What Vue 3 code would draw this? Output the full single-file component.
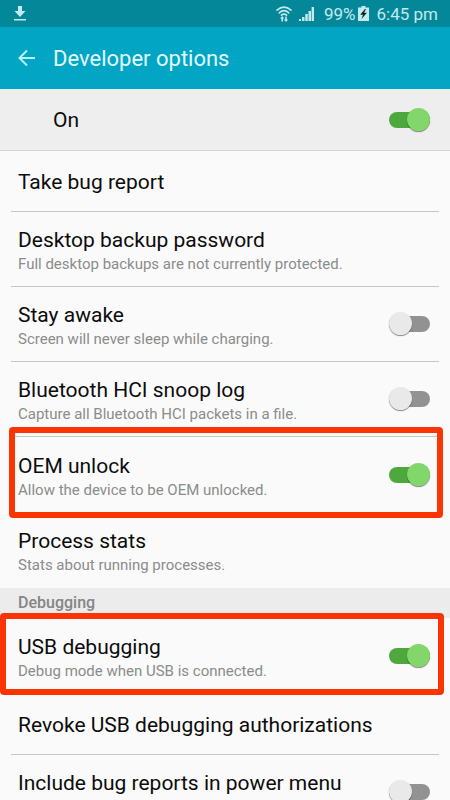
<script setup>
import { reactive, ref } from 'vue'

const enabled = ref(true)

const general = reactive([
  { id: 'bug-report', title: 'Take bug report' },
  { id: 'backup', title: 'Desktop backup password', note: 'Full desktop backups are not currently protected.' },
  { id: 'awake', title: 'Stay awake', note: 'Screen will never sleep while charging.', toggle: true, on: false },
  { id: 'snoop', title: 'Bluetooth HCI snoop log', note: 'Capture all Bluetooth HCI packets in a file.', toggle: true, on: false },
  { id: 'oem', title: 'OEM unlock', note: 'Allow the device to be OEM unlocked.', toggle: true, on: true, mark: 'mark-oem' },
  { id: 'stats', title: 'Process stats', note: 'Stats about running processes.' }
])

const debugging = reactive([
  { id: 'usb', title: 'USB debugging', note: 'Debug mode when USB is connected.', toggle: true, on: true, mark: 'mark-usb' },
  { id: 'revoke', title: 'Revoke USB debugging authorizations' },
  { id: 'power-menu', title: 'Include bug reports in power menu', note: 'Include option in power menu for taking a bug report.', toggle: true, on: false }
])

const groups = [
  { id: 'general', items: general },
  { id: 'debugging', heading: 'Debugging', items: debugging }
]
</script>

<template>
  <div class="screen">
    <div class="status">
      <svg class="download" width="12" height="15" viewBox="0 0 12 15" aria-hidden="true">
        <path d="M4 0h4v5h3.5L6 11 .5 5H4z" />
        <path d="M0 13h12v1.500H0z" />
      </svg>
      <div class="status-right">
        <svg class="wifi" width="16" height="16" viewBox="0 0 16 16" aria-hidden="true">
          <g fill="none" stroke="currentColor" stroke-width="1.600" stroke-linecap="round">
            <path d="M1 4.200Q8-2 15 4.200" />
            <path d="M3.200 6.800Q8 2.600 12.800 6.800" />
            <path d="M5.400 9.200Q8 7 10.600 9.200" />
          </g>
          <path d="M6.200 10l2.200 2.500H7v3H5.400v-3H4zM10 16l-2.200-2.500h1.400v-3h1.600v3h1.400z" />
        </svg>
        <svg class="signal" width="15" height="14" viewBox="0 0 15 14" aria-hidden="true">
          <path d="M0 12h2v2H0zM3 10h2.500v4H3zM6.300 7h2.500v7H6.300zM9.500 4H12v10H9.500zM12.600 0H15v14h-2.400z" />
        </svg>
        <span class="percent">99%</span>
        <svg class="battery" width="11" height="15" viewBox="0 0 11 15" aria-hidden="true">
          <path d="M3.500 0h4v1.500H11V15H0V1.500h3.500z" />
          <path class="bolt" d="M7 3L2.200 8.800H5L3.500 13l5.400-6.200H6L8 3z" />
        </svg>
        <span>6:45 pm</span>
      </div>
    </div>

    <header class="bar">
      <button class="back" type="button" aria-label="Back">
        <svg width="18" height="18" viewBox="0 0 18 18" aria-hidden="true">
          <path d="M17 9H1.500M9 1.500L1.500 9 9 16.500" fill="none" stroke="currentColor" stroke-width="2" />
        </svg>
      </button>
      <h1>Developer options</h1>
    </header>

    <label class="master">
      <span class="title">On</span>
      <input v-model="enabled" class="switch" type="checkbox" role="switch">
    </label>

    <main class="list">
      <section v-for="group in groups" :key="group.id">
        <h2 v-if="group.heading" class="heading">{{ group.heading }}</h2>
        <div v-for="item in group.items" :key="item.id" class="item">
          <component
            :is="item.toggle ? 'label' : 'button'"
            class="row"
            :class="{ single: !item.note, marked: item.mark }"
            :type="item.toggle ? undefined : 'button'"
          >
            <span class="text">
              <span class="title">{{ item.title }}</span>
              <span v-if="item.note" class="note">{{ item.note }}</span>
            </span>
            <input v-if="item.toggle" v-model="item.on" class="switch" type="checkbox" role="switch">
          </component>
          <span v-if="item.mark" class="mark" :class="item.mark" />
        </div>
      </section>
    </main>
  </div>
</template>

<style>
body {
  margin: 0;
  background: #fafafa;
}
</style>

<style scoped>
.screen {
  display: flex;
  flex-direction: column;
  height: 100vh;
  overflow: hidden;
  background: #fafafa;
  color: #0c0c0c;
  font-family: Roboto, "Liberation Sans", sans-serif;
}

.status {
  flex: none;
  display: flex;
  align-items: center;
  justify-content: space-between;
  height: 27px;
  padding: 0 12px 0 14px;
  background: #038799;
  color: #c4e9ee;
  font-size: 17px;
  line-height: 20px;
}

.status svg {
  fill: currentColor;
}

.status-right {
  display: flex;
  align-items: center;
}

.signal {
  margin-left: 7px;
}

.percent {
  margin: 0 2px 0 10px;
}

.battery {
  margin-right: 8px;
}

.status .bolt {
  fill: #06262b;
}

.bar {
  flex: none;
  box-sizing: border-box;
  display: flex;
  align-items: center;
  gap: 17px;
  height: 62px;
  padding: 0 18px;
  background: #02a5c4;
  color: #e2fbff;
}

.back {
  display: flex;
  padding: 0;
  border: 0;
  background: none;
  color: #b4f6ff;
}

.bar h1 {
  margin: 0;
  padding-top: 2px;
  font-size: 22px;
  font-weight: 400;
  line-height: 28px;
}

.master {
  flex: none;
  display: flex;
  align-items: center;
  justify-content: space-between;
  height: 61px;
  padding: 0 20px 0 53px;
  border-bottom: 1px solid #d6d6d6;
  background: #eeeeee;
}

.title {
  font-size: 21px;
  line-height: 26px;
}

.list {
  flex: 1;
  min-height: 0;
  overflow-y: auto;
  scrollbar-width: none;
}

.item {
  position: relative;
  padding: 0 11px;
}

.row {
  box-sizing: border-box;
  display: flex;
  align-items: center;
  justify-content: space-between;
  width: 100%;
  height: 75px;
  padding: 0 9px 0 7px;
  border: 0;
  border-bottom: 1px solid #c6c6c6;
  background: none;
  color: inherit;
  font-family: inherit;
  text-align: left;
}

.row.single {
  height: 61px;
}

.row.marked {
  height: 76px;
}

.row.marked,
.item:last-child .row {
  border-bottom-color: transparent;
}

.text {
  display: flex;
  flex-direction: column;
  padding-top: 4px;
}

.single .text {
  padding-top: 2px;
}

.note {
  color: #8a8d8a;
  font-size: 15px;
  line-height: 22px;
}

.heading {
  margin: 0;
  padding: 0 18px;
  background: #ececec;
  color: #858585;
  font-size: 16px;
  font-weight: 500;
  line-height: 30px;
}

.switch {
  appearance: none;
  position: relative;
  flex: none;
  display: flex;
  align-items: center;
  width: 41px;
  height: 24px;
  margin: 0;
}

.switch::before {
  content: "";
  width: 100%;
  height: 16px;
  border-radius: 8px;
  background: #929292;
}

.switch::after {
  content: "";
  position: absolute;
  top: 0;
  left: 0;
  width: 23px;
  height: 23px;
  border-radius: 50%;
  background: #e9e9e9;
  box-shadow: 0 1px 1px rgba(0, 0, 0, 0.45);
}

.switch:checked::before {
  background: #4ea83e;
}

.switch:checked::after {
  right: 0;
  left: auto;
  background: #82d76a;
}

.mark {
  position: absolute;
  z-index: 1;
  border: 6px solid #fb3404;
  border-radius: 4px;
  pointer-events: none;
}

.mark-oem {
  top: -10px;
  right: 7px;
  bottom: -5px;
  left: 9px;
}

.mark-usb {
  top: -5px;
  right: 6px;
  bottom: -1px;
  left: 0;
}
</style>
